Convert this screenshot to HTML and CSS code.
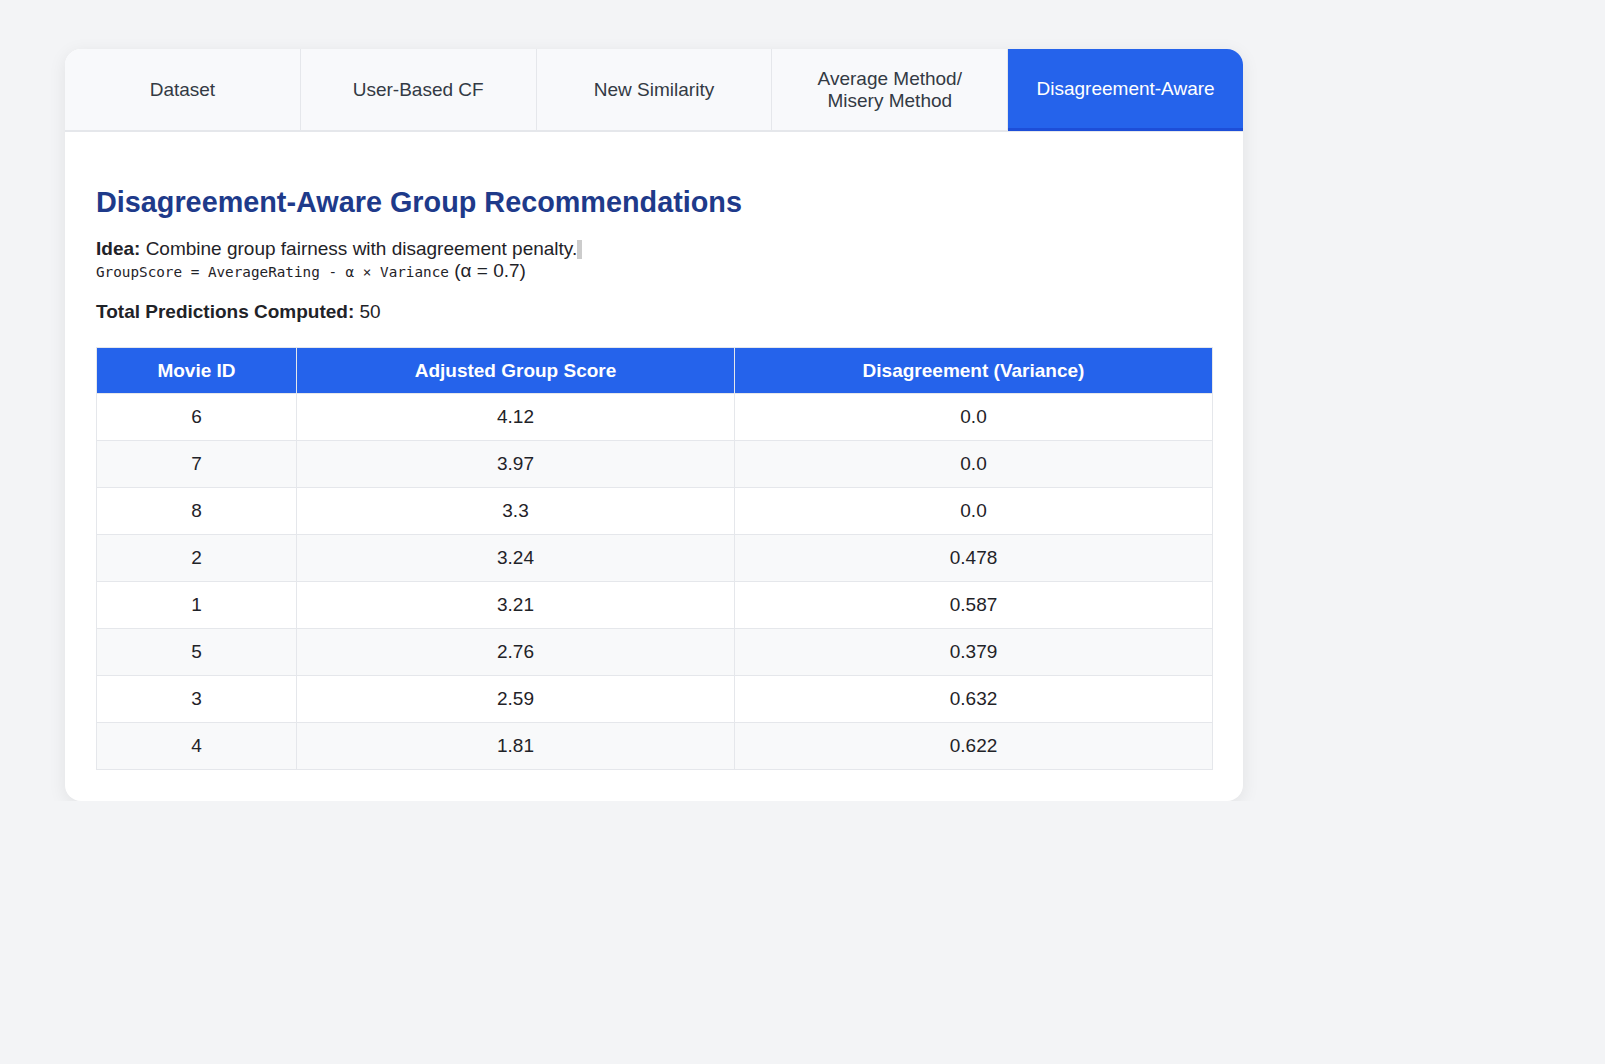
FILE: index.html
```html
<!DOCTYPE html>
<html lang="en">
<head>
<meta charset="utf-8">
<title>Disagreement-Aware Group Recommendations</title>
<link rel="stylesheet" href="styles.css">
</head>
<body>
<div class="card">
  <nav class="tabs">
    <div class="tab">Dataset</div>
    <div class="tab">User-Based CF</div>
    <div class="tab">New Similarity</div>
    <div class="tab">Average Method/<br>Misery Method</div>
    <div class="tab active">Disagreement-Aware</div>
  </nav>
  <section class="content">
    <h2 class="title">Disagreement-Aware Group Recommendations</h2>
    <p class="idea"><strong>Idea:</strong> Combine group fairness with disagreement penalty.<span class="mark"></span><br><code class="formula">GroupScore = AverageRating - α × Variance</code> (α = 0.7)</p>
    <p class="total"><strong>Total Predictions Computed:</strong> 50</p>
    <table class="results">
      <colgroup>
        <col class="c1"><col class="c2"><col class="c3">
      </colgroup>
      <thead>
        <tr><th>Movie ID</th><th>Adjusted Group Score</th><th>Disagreement (Variance)</th></tr>
      </thead>
      <tbody>
        <tr><td>6</td><td>4.12</td><td>0.0</td></tr>
        <tr><td>7</td><td>3.97</td><td>0.0</td></tr>
        <tr><td>8</td><td>3.3</td><td>0.0</td></tr>
        <tr><td>2</td><td>3.24</td><td>0.478</td></tr>
        <tr><td>1</td><td>3.21</td><td>0.587</td></tr>
        <tr><td>5</td><td>2.76</td><td>0.379</td></tr>
        <tr><td>3</td><td>2.59</td><td>0.632</td></tr>
        <tr><td>4</td><td>1.81</td><td>0.622</td></tr>
      </tbody>
    </table>
  </section>
</div>
</body>
</html>
```

FILE: styles.css
```css
html, body {
  margin: 0;
  background: #f3f4f6;
}
body {
  padding: 49px 0 0 65px;
  font-family: "Liberation Sans", Arial, sans-serif;
  color: #1f2328;
}
.card {
  width: 1178px;
  background: #ffffff;
  border-radius: 16px;
  box-shadow: 0 4px 18px rgba(0, 0, 0, 0.08);
  overflow: hidden;
}
.tabs {
  display: flex;
  height: 81px;
  background: #f8f9fb;
  border-bottom: 2px solid #e5e7eb;
}
.tab {
  flex: 1 1 0;
  display: flex;
  align-items: center;
  justify-content: center;
  text-align: center;
  font-size: 19px;
  line-height: 22px;
  color: #333a44;
  border-right: 1px solid #e5e7eb;
}
.tab.active {
  background: #2563eb;
  color: #ffffff;
  border-right: none;
  box-shadow: inset 0 -3px 0 #1d4ed8;
  height: 82px;
  padding-bottom: 2px;
  box-sizing: border-box;
}
.content {
  padding: 32px 30px 31px 31px;
}
.title {
  margin: 22px 0 19px;
  font-size: 28.8px;
  line-height: 33px;
  font-weight: bold;
  color: #1e3a8a;
}
.idea {
  margin: 0 0 18px;
  font-size: 19px;
  line-height: 22px;
}
.mark {
  display: inline-block;
  width: 5px;
  height: 19px;
  background: #cccccc;
  vertical-align: -4px;
}
.formula {
  font-family: "DejaVu Sans Mono", "Liberation Mono", monospace;
  font-size: 14.3px;
}
.total {
  margin: 0 0 24px;
  font-size: 19px;
  line-height: 22px;
}
.results {
  width: 100%;
  border-collapse: collapse;
  font-size: 19px;
  line-height: 22px;
}
.c1 { width: 200px; }
.c2 { width: 438px; }
.c3 { width: 478px; }
.results th {
  background: #2563eb;
  color: #ffffff;
  font-weight: bold;
  padding: 12px 12px 11px;
  border: 1px solid #e5e7eb;
  text-align: center;
}
.results td {
  padding: 12px;
  border: 1px solid #e5e7eb;
  text-align: center;
  color: #1f2328;
}
.results tbody tr:nth-child(even) td {
  background: #f8f9fa;
}
```
